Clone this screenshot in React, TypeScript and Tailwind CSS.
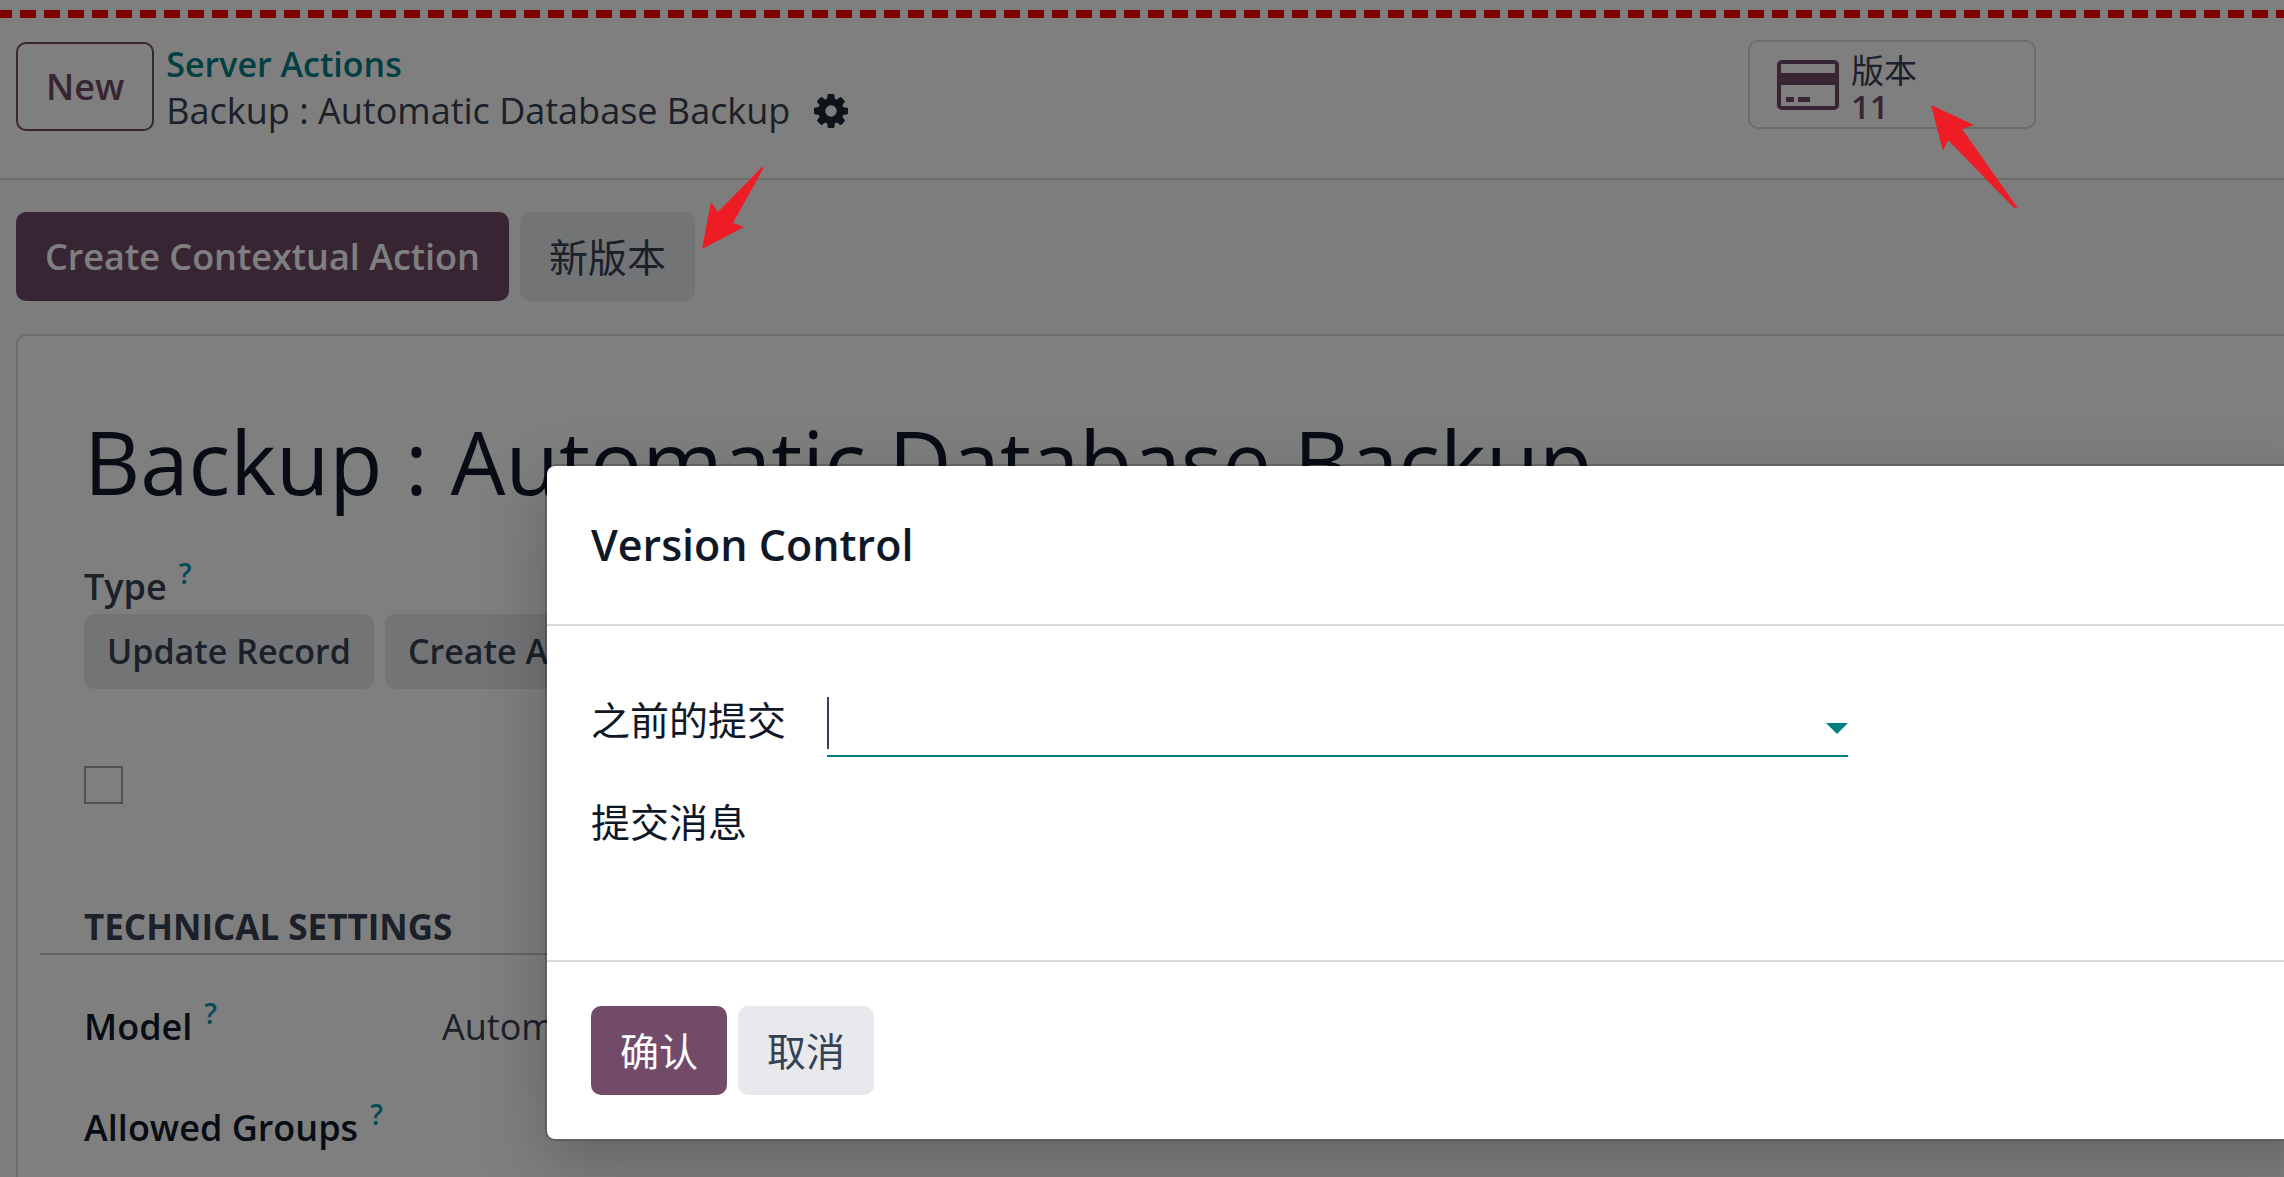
import React from 'react';

const Help = () => <sup className="ml-3 -top-4 text-[28px] leading-none text-[#0199b0]">?</sup>;

const CogIcon = () => (
  <svg className="w-[34px] h-[34px] fill-current" viewBox="0 128 1536 1536">
    <path d="M1024 896q0-106-75-181t-181-75-181 75-75 181 75 181 181 75 181-75 75-181zm512-109v222q0 12-8 23t-20 13l-185 28q-19 54-39 91 35 50 107 138 10 12 10 25t-9 23q-27 37-99 108t-94 71q-12 0-26-9l-138-108q-44 23-91 38-16 136-29 186-7 28-36 28h-222q-14 0-24.5-8.5t-11.5-21.5l-28-184q-49-16-90-37l-141 107q-10 9-25 9-14 0-25-11-126-114-165-168-7-10-7-23 0-12 8-23 15-21 51-66.5t54-70.5q-27-50-41-99l-183-27q-13-2-21-12.5t-8-23.5v-222q0-12 8-23t19-13l186-28q14-46 39-92-40-57-107-138-10-12-10-24 0-10 9-23 26-36 98.5-107.5t94.5-71.5q13 0 26 10l138 107q44-23 91-38 16-136 29-186 7-28 36-28h222q14 0 24.5 8.5t11.5 21.5l28 184q49 16 90 37l142-107q9-9 24-9 13 0 25 10 129 119 165 170 7 8 7 22 0 12-8 23-15 21-51 66.5t-54 70.5q26 50 41 98l183 28q13 2 21 12.5t8 23.5z" />
  </svg>
);

const CardIcon = () => (
  <svg className="w-[62px] h-[50px] text-[#714B67]" viewBox="0 0 62 50">
    <rect x="2" y="2" width="58" height="46" rx="3" fill="none" stroke="currentColor" strokeWidth="4" />
    <path fill="currentColor" d="M2 13h58v12H2zM9 37h8v5H9zM21 37h12v5H21z" />
  </svg>
);

const App = () => {
  return (
    <div className="relative h-screen overflow-hidden bg-neutral-50 font-['Open_Sans','Noto_Sans_CJK_SC',sans-serif] text-[36px] leading-[53px] text-gray-700">
      {/* Page */}
      <header className="bg-white border-b-2 border-[#d9d9d9]">
        <div className="pt-[10px]">
          <div className="h-2 bg-[repeating-linear-gradient(90deg,#f00_0_16px,transparent_16px_24px)] bg-[position:-4px_0]"></div>
        </div>
        <div className="flex items-start px-4 pt-[22px] pb-11">
          <button className="mt-[2px] h-[89px] px-7 rounded-[10px] border-2 border-[#714B67] text-[#714B67] font-semibold">New</button>
          <div className="ml-3">
            <a href="#" className="block leading-[48px] text-[34px] font-semibold text-[#017E84]">Server Actions</a>
            <div className="flex items-center leading-[46px]">
              <span>Backup : Automatic Database Backup</span>
              <button aria-label="Actions" className="ml-6 text-gray-800"><CogIcon /></button>
            </div>
          </div>
          <button className="ml-auto mr-[232px] flex items-center w-[288px] h-[89px] px-[27px] rounded-[10px] border-2 border-[#d9d9d9] text-left">
            <CardIcon />
            <span className="ml-3 mt-2 flex flex-col text-[33px] leading-[36px]">
              <span>版本</span>
              <span className="font-semibold text-[#714B67]">11</span>
            </span>
          </button>
        </div>
      </header>

      <main className="pl-4 pt-8">
        <div className="flex gap-[11px]">
          <button className="h-[89px] px-[29px] rounded-[10px] bg-[#714B67] text-white font-semibold">Create Contextual Action</button>
          <button className="h-[89px] px-[29px] rounded-[10px] bg-[#E7E9ED] text-[39px]">新版本</button>
        </div>

        <section className="mt-[33px] pl-[66px] pt-[62px] min-h-screen rounded-l-[10px] border-2 border-r-0 border-[#d9d9d9] bg-white">
          <h1 className="text-[87px] leading-[126px] text-gray-900 whitespace-nowrap">Backup : Automatic Database Backup</h1>
          <div className="mt-9 h-[54px] font-semibold">Type<Help /></div>
          <div className="flex gap-[11px] text-[34px]">
            <button className="h-[75px] px-[23px] rounded-[10px] bg-[#E7E9ED] font-semibold">Update Record</button>
            <button className="h-[75px] px-[23px] rounded-[10px] bg-[#E7E9ED] font-semibold">Create Activity</button>
          </div>
          <input type="checkbox" aria-label="Active" className="mt-[77px] block appearance-none w-[39px] h-[38px] border-2 border-gray-400" />
          <h2 className="mt-24 -ml-[44px] pl-[44px] border-b-2 border-[#c8c8c8] text-[35px] font-bold">TECHNICAL SETTINGS</h2>
          <div className="mt-[45px] flex font-semibold text-gray-900">
            <div className="w-[358px]">Model<Help /></div>
            <div className="font-normal text-gray-700">Automatic</div>
          </div>
          <div className="mt-12 font-semibold text-gray-900">Allowed Groups<Help /></div>
        </section>
      </main>

      {/* Backdrop */}
      <div className="absolute inset-0 bg-black/50"></div>

      {/* Modal */}
      <div role="dialog" aria-labelledby="modal-title" className="absolute left-[545px] -right-8 top-[464px] rounded-[10px] border-2 border-black/20 bg-white bg-clip-padding text-gray-900 shadow-[0_22px_66px_rgba(0,0,0,0.22)]">
        <div className="px-11 py-12 border-b-2 border-[#d9d9d9]">
          <h2 id="modal-title" className="text-[43px] leading-[62px] font-semibold">Version Control</h2>
        </div>
        <div className="px-11 pt-[67px] pb-28 text-[39px]">
          <div className="flex">
            <label htmlFor="previous" className="w-[236px]">之前的提交</label>
            <div className="relative w-[1021px] h-16 border-b-2 border-[#017E84]">
              <input id="previous" type="text" className="w-full h-full outline-none" />
              <span className="absolute left-0 top-1 w-[2px] h-[52px] bg-gray-700"></span>
              <svg className="absolute right-0 top-[30px] w-[22px] h-[11px] fill-[#017E84]" viewBox="0 0 22 11"><path d="M0 0h22L11 11z" /></svg>
            </div>
          </div>
          <div className="mt-[38px]">提交消息</div>
        </div>
        <div className="flex gap-[11px] px-11 py-11 border-t-2 border-[#d9d9d9] text-[39px]">
          <button className="h-[89px] px-[29px] rounded-[10px] bg-[#714B67] text-white">确认</button>
          <button className="h-[89px] px-[29px] rounded-[10px] bg-[#E7E9ED] text-gray-700">取消</button>
        </div>
      </div>

      {/* Arrows */}
      <svg className="absolute left-[702px] top-[167px] w-[62px] h-[82px] fill-[#ee1c25]" viewBox="0 0 62 82"><path d="M60 0Q62 0 61 2L31 56L42 60L0 82L9 35L16 45L58 2Z" /></svg>
      <svg className="absolute left-[1931px] top-[105px] w-[88px] h-[104px] fill-[#ee1c25]" viewBox="0 0 88 104"><path d="M0 0L43 20L31 24L86 102Q85 105 82 102L17 35L12 46Z" /></svg>
    </div>
  );
};

export default App;
